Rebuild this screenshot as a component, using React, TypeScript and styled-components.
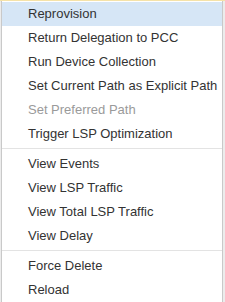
import React from "react";
import styled, { createGlobalStyle } from "styled-components";

const GlobalStyle = createGlobalStyle`
  html, body {
    margin: 0;
    padding: 0;
    background: #ececec;
  }
  body {
    font-family: "Liberation Sans", Arial, sans-serif;
  }
`;

type Item = { label: string; disabled?: boolean; active?: boolean };

const groups: Item[][] = [
  [
    { label: "Reprovision", active: true },
    { label: "Return Delegation to PCC" },
    { label: "Run Device Collection" },
    { label: "Set Current Path as Explicit Path" },
    { label: "Set Preferred Path", disabled: true },
    { label: "Trigger LSP Optimization" },
  ],
  [
    { label: "View Events" },
    { label: "View LSP Traffic" },
    { label: "View Total LSP Traffic" },
    { label: "View Delay" },
  ],
  [{ label: "Force Delete" }, { label: "Reload" }],
];

const App: React.FC = () => {
  return (
    <>
      <GlobalStyle />
      <Page>
        <TopStrip />
        <Menu>
          {groups.map((group, gi) => (
            <React.Fragment key={gi}>
              {gi > 0 && <Separator />}
              {group.map((item) => (
                <MenuItem key={item.label} active={item.active} disabled={item.disabled}>
                  {item.label}
                </MenuItem>
              ))}
            </React.Fragment>
          ))}
        </Menu>
      </Page>
    </>
  );
};

const Page = styled.div`
  width: 225px;
  height: 302px;
  overflow: hidden;
  display: flex;
  flex-direction: column;
`;

const TopStrip = styled.div`
  height: 1px;
  background: #f5e2a8;
`;

const Menu = styled.ul`
  list-style: none;
  margin: 0 0 0 1px;
  padding: 1px 0 0 0;
  width: 220px;
  flex: 1;
  background: #ffffff;
  border-left: 1px solid #c9c9c9;
  border-right: 1px solid #c9c9c9;
  display: flex;
  flex-direction: column;
`;

const MenuItem = styled.li<{ active?: boolean; disabled?: boolean }>`
  height: 24px;
  line-height: 24px;
  padding-left: 26px;
  font-size: 13px;
  white-space: nowrap;
  color: ${(p) => (p.disabled ? "#9a9a9a" : "#333333")};
  background: ${(p) => (p.active ? "#d6e6f6" : "transparent")};
`;

const Separator = styled.li`
  height: 1px;
  margin: 2px 0 3px;
  background: #e3e3e3;
`;

export default App;
